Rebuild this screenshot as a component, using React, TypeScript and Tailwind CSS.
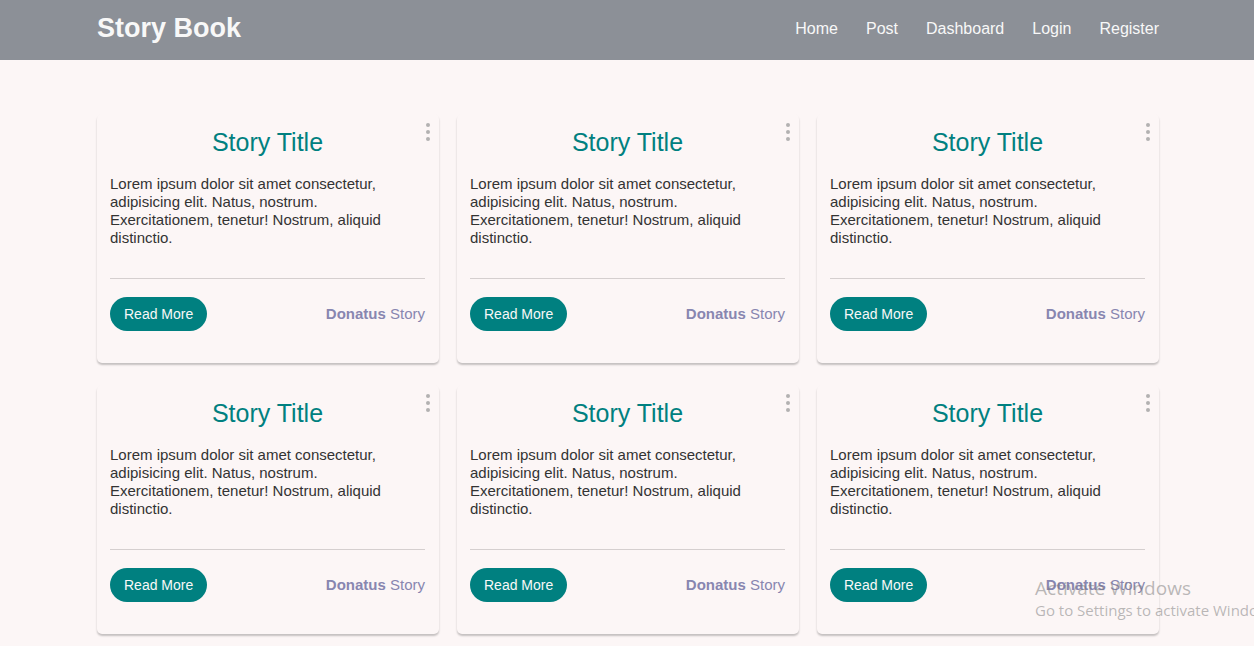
const navLinks = ["Home", "Post", "Dashboard", "Login", "Register"];
const stories = [1, 2, 3, 4, 5, 6];

function Header() {
  return (
    <header className="flex h-[60px] items-center justify-between bg-[#8c9097] pr-[95px] pl-[97px] text-[#f8f8f8]">
      <h1 className="pb-1 text-[27px] leading-8 font-bold">
        <a href="#home">Story Book</a>
      </h1>
      <nav className="flex gap-7 pb-[2px] text-base">
        {navLinks.map((label) => (
          <a key={label} href={`#${label.toLowerCase()}`}>
            {label}
          </a>
        ))}
      </nav>
    </header>
  );
}

function StoryCard() {
  return (
    <article className="relative rounded-[5px] pt-[14px] pr-[14px] pb-8 pl-[13px] shadow-[0_2px_2px_rgba(0,0,0,0.22)]">
      <button
        type="button"
        aria-label="Story options"
        className="absolute top-[9px] right-[9px] flex flex-col gap-[3px]"
      >
        <span className="size-1 rounded-full bg-[#b3b1b1]" />
        <span className="size-1 rounded-full bg-[#b3b1b1]" />
        <span className="size-1 rounded-full bg-[#b3b1b1]" />
      </button>
      <h2 className="text-center text-[25px] leading-7 text-[#008080]">Story Title</h2>
      <p className="mt-[19px] text-[15px] leading-[18px] text-[#333]">
        Lorem ipsum dolor sit amet consectetur, adipisicing elit. Natus, nostrum. Exercitationem,
        tenetur! Nostrum, aliquid distinctio.
      </p>
      <hr className="mt-[31px] border-[#d5cfcf]" />
      <div className="mt-[18px] flex items-center justify-between text-[15px] leading-[18px]">
        <button
          type="button"
          className="rounded-[20px] bg-[#008080] px-[14px] py-2 text-[14px] leading-[18px] text-[#f8f8f8]"
        >
          Read More
        </button>
        <p className="text-[#8886b0]">
          <strong>Donatus</strong> Story
        </p>
      </div>
    </article>
  );
}

export default function App() {
  return (
    <div className="relative min-h-screen overflow-hidden bg-[#fcf6f6] font-['Liberation_Sans',Arial,sans-serif]">
      <Header />
      <main className="grid grid-cols-3 gap-x-[18px] gap-y-[22px] pt-[54px] pr-[95px] pb-3 pl-[97px]">
        {stories.map((id) => (
          <StoryCard key={id} />
        ))}
      </main>
      <aside className="pointer-events-none absolute top-[576px] left-[1035px] font-['Open_Sans',sans-serif] whitespace-nowrap text-[#777]/50">
        <p className="text-[19px] leading-6">Activate Windows</p>
        <p className="text-[15px] leading-5">Go to Settings to activate Windows.</p>
      </aside>
    </div>
  );
}
